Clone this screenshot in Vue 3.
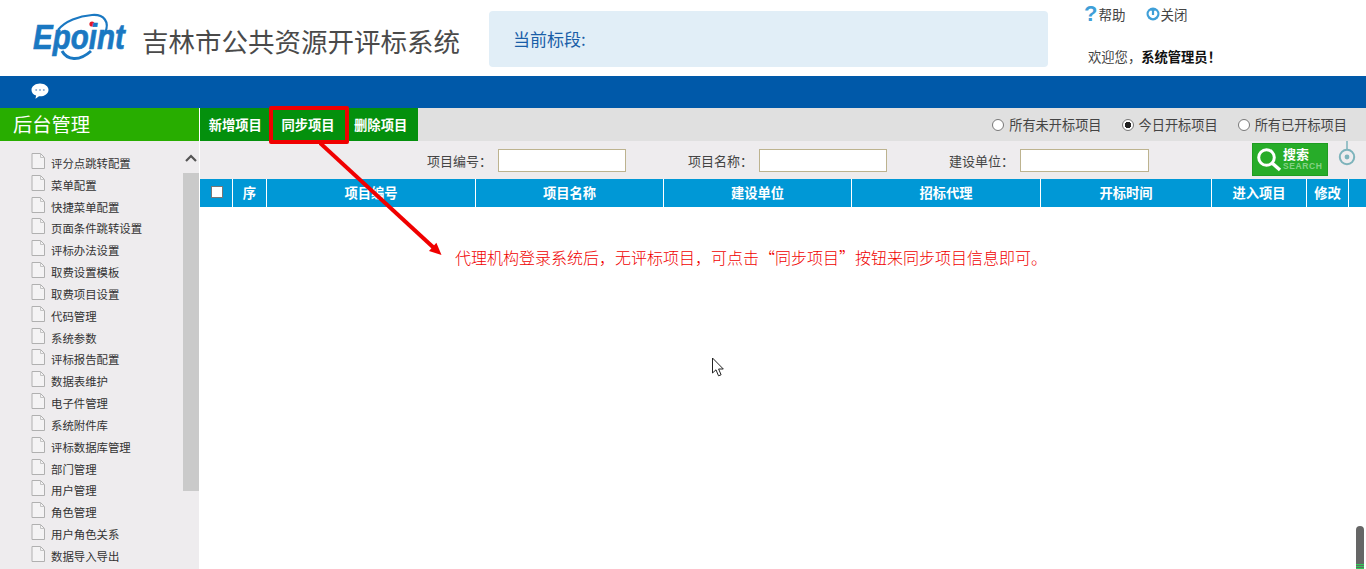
<template>
  <div class="page">
    <header class="top">
      <div class="logo">
        <svg width="96" height="50" viewBox="0 0 96 50">
          <path d="M25 17C32 8 46 3 59 2C71 1 77 9 72 20" fill="none" stroke="#1a78c2" stroke-width="2.200" />
          <path d="M29 38C34 47 46 49 58 38" fill="none" stroke="#1a78c2" stroke-width="3" />
          <circle cx="59" cy="11" r="2.600" fill="#e01b24" />
          <text transform="translate(0 35.500) scale(1 1.180)" class="logo-text">Epoint</text>
        </svg>
      </div>
      <h1 class="sys-title">吉林市公共资源开评标系统</h1>
      <div class="section-box">当前标段:</div>
      <div class="user-area">
        <div class="links">
          <span class="link"><b class="help-mark">?</b>帮助</span>
          <span class="link">
            <svg width="14" height="14" viewBox="0 0 14 14">
              <circle cx="7" cy="7" r="6.500" fill="#3f9fd8" />
              <path d="M4 3.800a4.200 4.200 0 1 0 6 0z" fill="#fff" />
              <path d="M7 2v6" stroke="#3f9fd8" stroke-width="2.200" />
            </svg>关闭
          </span>
        </div>
        <div class="welcome">欢迎您，<strong>系统管理员！</strong></div>
      </div>
    </header>

    <div class="blue-bar">
      <svg width="18" height="16" viewBox="0 0 18 16">
        <path d="M9 0.500c4.700 0 8.500 2.900 8.500 6.400s-3.800 6.400-8.500 6.400h-1l-3.500 2.400 0.600-3.100C2.300 11.500 0.500 9.400 0.500 6.900 0.500 3.400 4.300 0.500 9 0.500z" fill="#fff" />
        <circle cx="5.200" cy="7" r="1" fill="#8aa9cf" />
        <circle cx="9" cy="7" r="1" fill="#8aa9cf" />
        <circle cx="12.800" cy="7" r="1" fill="#8aa9cf" />
      </svg>
    </div>

    <div class="body">
      <aside class="side">
        <div class="side-title">后台管理</div>
        <div class="side-wrap">
          <ul class="menu">
            <li v-for="item in menu" :key="item">
              <svg width="14" height="16" viewBox="0 0 14 16">
                <path d="M1 .5h8.500L13.500 4.500V15.500H1z" fill="#f4f3f4" stroke="#b0b0b0" />
                <path d="M9.500 .5V4.500H13.500" fill="none" stroke="#c4c4c4" />
              </svg>
              <span>{{ item }}</span>
            </li>
          </ul>
          <div class="side-scroll">
            <svg class="scroll-up" width="12" height="8" viewBox="0 0 12 8">
              <path d="M1 7l5-5 5 5" fill="none" stroke="#555" stroke-width="2.200" />
            </svg>
            <div class="scroll-thumb"></div>
          </div>
        </div>
      </aside>

      <main class="content">
        <div class="toolbar">
          <div class="tool-btns">
            <button v-for="b in buttons" :key="b" class="tool-btn">{{ b }}</button>
          </div>
          <div class="filters">
            <label v-for="f in filters" :key="f.text" class="radio">
              <i class="dot" :class="{ on: f.on }"></i>{{ f.text }}
            </label>
          </div>
        </div>

        <div class="search-row">
          <div v-for="s in searchFields" :key="s" class="field">
            <span>{{ s }}：</span>
            <input type="text" />
          </div>
          <div class="search-btn">
            <svg width="27" height="27" viewBox="0 0 27 27">
              <circle cx="10.500" cy="10.500" r="7.800" fill="none" stroke="#fff" stroke-width="3" />
              <path d="M16 16l8 7" stroke="#fff" stroke-width="3.500" />
            </svg>
            <div class="search-label">
              <b>搜索</b>
              <small>SEARCH</small>
            </div>
          </div>
          <svg class="pin" width="18" height="26" viewBox="0 0 18 26">
            <path d="M9 0v9" stroke="#7db3bb" stroke-width="1.500" />
            <circle cx="9" cy="16" r="7.200" fill="none" stroke="#7db3bb" stroke-width="2" />
            <circle cx="9" cy="16" r="2.400" fill="#7db3bb" />
          </svg>
        </div>

        <div class="table-head">
          <div class="col check"><i class="box"></i></div>
          <div v-for="c in columns" :key="c.text" class="col" :style="{ width: c.w + 'px' }">{{ c.text }}</div>
          <div class="col rest"></div>
        </div>
      </main>
    </div>

    <!-- 标注 -->
    <div class="mark-box"></div>
    <svg class="arrow" width="140" height="125" viewBox="0 0 140 125">
      <path d="M1 2L115 107" stroke="#f00000" stroke-width="4" />
      <path d="M122.500 114L110 110 117.400 101.800z" fill="#f00000" />
    </svg>
    <div class="note">代理机构登录系统后，无评标项目，可点击“同步项目”按钮来同步项目信息即可。</div>

    <svg class="cursor" width="14" height="21" viewBox="0 0 14 21">
      <path d="M1.500 1v15l3.500-3.200 2.500 6 2.600-1-2.500-5.800h4.700z" fill="#fff" stroke="#222" stroke-width="1" />
    </svg>
    <div class="page-handle"><i></i></div>
  </div>
</template>

<script setup>
const menu = [
  '评分点跳转配置', '菜单配置', '快捷菜单配置', '页面条件跳转设置', '评标办法设置',
  '取费设置模板', '取费项目设置', '代码管理', '系统参数', '评标报告配置',
  '数据表维护', '电子件管理', '系统附件库', '评标数据库管理', '部门管理',
  '用户管理', '角色管理', '用户角色关系', '数据导入导出'
]
const buttons = ['新增项目', '同步项目', '删除项目']
const filters = [
  { text: '所有未开标项目', on: false },
  { text: '今日开标项目', on: true },
  { text: '所有已开标项目', on: false }
]
const searchFields = ['项目编号', '项目名称', '建设单位']
const columns = [
  { text: '序', w: 34 },
  { text: '项目编号', w: 209 },
  { text: '项目名称', w: 188 },
  { text: '建设单位', w: 188 },
  { text: '招标代理', w: 189 },
  { text: '开标时间', w: 171 },
  { text: '进入项目', w: 95 },
  { text: '修改', w: 42 }
]
</script>

<style>
html, body {
  margin: 0;
  height: 100%;
  overflow: hidden;
  background: #fff;
}
</style>

<style scoped>
.page {
  position: relative;
  width: 1366px;
  height: 569px;
  overflow: hidden;
  font-family: "Noto Sans CJK SC", "Liberation Sans", sans-serif;
  font-size: 13px;
  color: #333;
}
.top {
  height: 76px;
  display: flex;
  background: #fff;
}
.logo {
  width: 142px;
  padding: 13px 0 0 33px;
  box-sizing: border-box;
}
.logo-text {
  font-family: "Liberation Sans", sans-serif;
  font-size: 29.500px;
  font-weight: 700;
  font-style: italic;
  fill: #1a78c2;
  stroke: #1a78c2;
  stroke-width: 0.6px;
}
.sys-title {
  margin: 21px 0 0;
  width: 347px;
  font-size: 26.500px;
  line-height: 40px;
  font-weight: 400;
  color: #4a4a4a;
  white-space: nowrap;
}
.section-box {
  width: 559px;
  height: 56px;
  margin-top: 11px;
  padding-left: 24px;
  box-sizing: border-box;
  background: #e1eef7;
  border-radius: 4px;
  color: #1a5ea8;
  font-size: 17px;
  line-height: 55px;
}
.user-area {
  margin-left: 36px;
  padding-top: 4px;
}
.links {
  display: flex;
  gap: 21px;
  height: 20px;
  line-height: 20px;
  font-size: 13.500px;
  color: #444;
}
.link {
  display: flex;
  align-items: center;
}
.help-mark {
  color: #3f9fd8;
  font: 700 22px "Liberation Sans", sans-serif;
  margin-right: 1px;
}
.welcome {
  margin: 23px 0 0 4px;
  font-size: 13.300px;
  line-height: 20px;
  color: #444;
}
.welcome strong {
  color: #111;
}
.blue-bar {
  height: 32px;
  background: #0059a9;
  padding: 7px 0 0 31px;
  box-sizing: border-box;
}
.body {
  display: flex;
  height: 461px;
}
.side {
  width: 199px;
  background: #eeecee;
  border-right: 1px solid #fff;
  overflow: hidden;
}
.side-title {
  height: 33px;
  padding-left: 13px;
  background: #28ad00;
  color: #fff;
  font-size: 19.300px;
  line-height: 33px;
}
.side-wrap {
  display: flex;
  height: 428px;
}
.menu {
  flex: 1;
  list-style: none;
  margin: 0;
  padding: 11px 0 0 31px;
}
.menu li {
  display: flex;
  height: 21.840px;
  align-items: flex-start;
  font-size: 11.400px;
  line-height: 20px;
  color: #333;
}
.menu li svg {
  margin-top: 1px;
}
.menu li span {
  margin-left: 6px;
  padding-top: 1px;
}
.side-scroll {
  width: 16px;
  position: relative;
}
.scroll-up {
  display: block;
  margin: 13px auto 0 2px;
}
.scroll-thumb {
  height: 318px;
  margin-top: 11px;
  background: #cacaca;
}
.content {
  flex: 1;
  min-width: 0;
}
.toolbar {
  height: 33px;
  display: flex;
  justify-content: space-between;
  background: #e0e0e0;
}
.tool-btns {
  display: flex;
  width: 218px;
  background: #04900d;
}
.tool-btn {
  flex: 1;
  padding: 0 2px 0 0;
  border: 0;
  background: #04900d;
  color: #fff;
  font-family: inherit;
  font-size: 13.300px;
  font-weight: 700;
}
.filters {
  display: flex;
  gap: 20px;
  padding-right: 19px;
  align-items: center;
  font-size: 13.200px;
  color: #444;
}
.radio {
  display: flex;
  align-items: center;
}
.dot {
  width: 12px;
  height: 12px;
  margin-right: 5px;
  border: 1px solid #777;
  border-radius: 50%;
  box-sizing: border-box;
  background: #fff;
}
.dot.on {
  background: radial-gradient(circle, #222 0 3px, #fff 3.500px);
}
.search-row {
  height: 38px;
  display: flex;
  background: #eeecee;
  padding-left: 226px;
  position: relative;
}
.field {
  width: 261px;
  display: flex;
  align-items: center;
  justify-content: flex-end;
  box-sizing: border-box;
  height: 38px;
  font-size: 13px;
  color: #444;
}
.field input {
  width: 128px;
  height: 23px;
  margin-left: 6px;
  padding: 0;
  box-sizing: border-box;
  border: 1px solid #bdb38f;
  background: #fff;
}
.field:first-child {
  width: 200px;
}
.field:nth-child(3) {
  width: 262px;
}
.field:nth-child(3) input {
  width: 129px;
}
.search-btn {
  width: 76px;
  height: 33px;
  margin: 2px 0 0 103px;
  box-sizing: border-box;
  padding: 3px 0 0 3px;
  display: flex;
  background: #27ac29;
  border: 1px solid #1f9c22;
}
.search-label {
  color: #fff;
  line-height: 1;
}
.search-label b {
  display: block;
  font-size: 13px;
  line-height: 14px;
}
.search-label small {
  display: block;
  font: 700 8.500px "Liberation Sans", sans-serif;
  color: #85d285;
  letter-spacing: .6px;
}
.pin {
  margin: 0 0 0 10px;
}
.table-head {
  display: flex;
  height: 28px;
  background: #0098d6;
}
.col {
  box-sizing: border-box;
  border-right: 1px solid #fff;
  color: #fff;
  font-size: 13.300px;
  font-weight: 700;
  line-height: 28px;
  text-align: center;
}
.check {
  width: 33px;
}
.box {
  display: inline-block;
  width: 12px;
  height: 12px;
  margin: 0 0 4px 2px;
  vertical-align: middle;
  box-sizing: border-box;
  background: #fff;
  border: 1px solid #777;
}
.rest {
  flex: 1;
  border-right: 0;
}
.mark-box {
  position: absolute;
  left: 269px;
  top: 106px;
  width: 80px;
  height: 38px;
  box-sizing: border-box;
  border: 4px solid #f00000;
  border-radius: 2px;
}
.arrow {
  position: absolute;
  left: 319px;
  top: 141px;
}
.note {
  position: absolute;
  left: 455px;
  top: 245px;
  color: #f00000;
  font-size: 16px;
  font-weight: 300;
  line-height: 24px;
  text-spacing-trim: space-all;
  white-space: nowrap;
}
.cursor {
  position: absolute;
  left: 711px;
  top: 357px;
}
.page-handle {
  position: absolute;
  left: 1356px;
  top: 526px;
  width: 8px;
  height: 43px;
  background: #666;
  border-radius: 4px 4px 0 0;
}
.page-handle i {
  display: block;
  margin-top: 38px;
  height: 5px;
  background: repeating-linear-gradient(#2fce56 0 1px, #666 1px 2px);
}
</style>
